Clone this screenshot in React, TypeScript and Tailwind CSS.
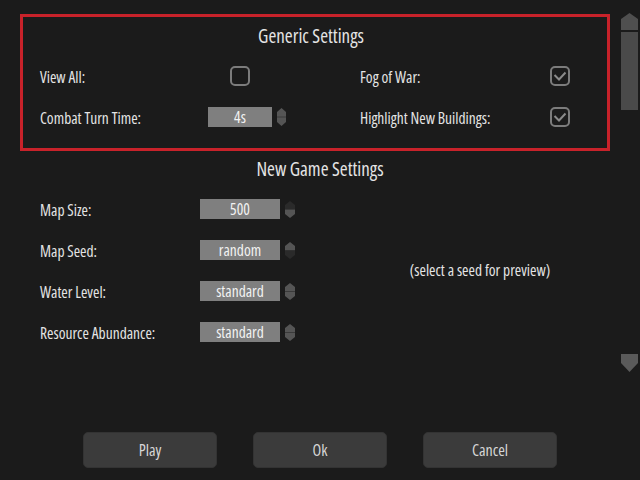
import React from "react";

const font = { fontFamily: '"Open Sans", "Liberation Sans", sans-serif' };

type SpinState = "both" | "down" | "up";

function Spinner({ state, small }: { state: SpinState; small?: boolean }) {
  const w = small ? 9 : 10;
  const h = small ? 18 : 17;
  const mid = h / 2;
  const top = state === "down" ? "#2a2a2a" : "#555555";
  const bottom = state === "up" ? "#2a2a2a" : "#555555";
  return (
    <svg width={w} height={h} viewBox={`0 0 ${w} ${h}`} className="block">
      <polygon points={`${w / 2},0 ${w},4 ${w},${mid} 0,${mid} 0,4`} fill={top} />
      <polygon points={`0,${mid} ${w},${mid} ${w},${h - 4} ${w / 2},${h} 0,${h - 4}`} fill={bottom} />
      {state === "both" && <line x1="0" y1={mid} x2={w} y2={mid} stroke="#3a3a3a" strokeWidth="1" />}
    </svg>
  );
}

function Checkbox({ checked }: { checked?: boolean }) {
  return (
    <div className="w-[20px] h-[20px] rounded-[5px] border-2 border-[#7c7c7c] flex items-center justify-center">
      {checked && (
        <svg width="14" height="12" viewBox="0 0 14 12">
          <polyline points="1.5,5 6,9.5 12.5,2.5" fill="none" stroke="#8a8a8a" strokeWidth="2" />
        </svg>
      )}
    </div>
  );
}

function ValueBox({ value, w }: { value: string; w: string }) {
  return (
    <div className={`${w} h-[20px] bg-[#7f7f7f] text-[#f2f2f2] text-[15.5px] leading-[20px] text-center`}>{value}</div>
  );
}

const gameRows: { label: string; value: string; spin: SpinState }[] = [
  { label: "Map Size:", value: "500", spin: "down" },
  { label: "Map Seed:", value: "random", spin: "up" },
  { label: "Water Level:", value: "standard", spin: "both" },
  { label: "Resource Abundance:", value: "standard", spin: "both" },
];

export default function App() {
  return (
    <div style={font} className="relative w-[640px] h-[480px] bg-[#1b1b1b] text-[#e4e4e4] font-medium font-stretch-condensed flex flex-col overflow-hidden">
      {/* Generic settings */}
      <div className="mt-[14px] ml-[20px] w-[590px] h-[137px] border-[3px] border-[#c8222a] flex flex-col">
        <div className="mt-[9px] h-[20px] leading-[20px] text-[19px] text-center pr-[8px]">Generic Settings</div>
        <div className="mt-[20px] flex items-center h-[20px] pl-[17px] text-[15.5px] leading-[20px]">
          <div className="w-[190px] pt-[2px]">View All:</div>
          <Checkbox />
          <div className="w-[110px]" />
          <div className="w-[190px] pt-[2px]">Fog of War:</div>
          <Checkbox checked />
        </div>
        <div className="mt-[21px] flex items-center h-[20px] pl-[17px] text-[15.5px] leading-[20px]">
          <div className="w-[168px] pt-[2px]">Combat Turn Time:</div>
          <ValueBox value="4s" w="w-[64px]" />
          <div className="ml-[5px] w-[83px]">
            <Spinner state="both" small />
          </div>
          <div className="w-[190px] pt-[2px]">Highlight New Buildings:</div>
          <Checkbox checked />
        </div>
      </div>

      {/* New game settings */}
      <div className="mt-[8px] h-[20px] leading-[20px] text-[19px] text-center">New Game Settings</div>
      <div className="mt-[20px] flex">
        <div className="w-[320px] flex flex-col gap-[21px] pl-[40px] text-[15.5px] leading-[20px]">
          {gameRows.map((r) => (
            <div key={r.label} className="flex items-center h-[20px]">
              <div className="w-[160px] pt-[2px]">{r.label}</div>
              <ValueBox value={r.value} w="w-[80px]" />
              <div className="ml-[5px]">
                <Spinner state={r.spin} />
              </div>
            </div>
          ))}
        </div>
        <div className="w-[300px] pl-[20px] flex items-center justify-center text-[15.5px]">
          (select a seed for preview)
        </div>
      </div>

      {/* Buttons */}
      <div className="mt-auto mb-[12px] flex justify-center gap-[36px]">
        {["Play", "Ok", "Cancel"].map((b) => (
          <button
            key={b}
            className="w-[134px] h-[36px] rounded-[5px] bg-[#3b3b3b] border border-[#333333] text-[#d6d6d6] text-[16px]"
          >
            {b}
          </button>
        ))}
      </div>

      {/* Scrollbar */}
      <div className="absolute right-[2px] top-[13px] w-[17px] flex flex-col">
        <svg width="17" height="17" viewBox="0 0 17 17" className="block">
          <polygon points="8.5,0 17,6 17,17 0,17 0,6" fill="#4f4f4f" />
        </svg>
        <div className="h-[2px]" />
        <div className="h-[78px] bg-[#4a4a4a]" />
        <div className="h-[244px]" />
        <svg width="17" height="18" viewBox="0 0 17 18" className="block">
          <polygon points="0,0 17,0 17,9 8.5,18 0,9" fill="#5a5a5a" />
        </svg>
      </div>
    </div>
  );
}
